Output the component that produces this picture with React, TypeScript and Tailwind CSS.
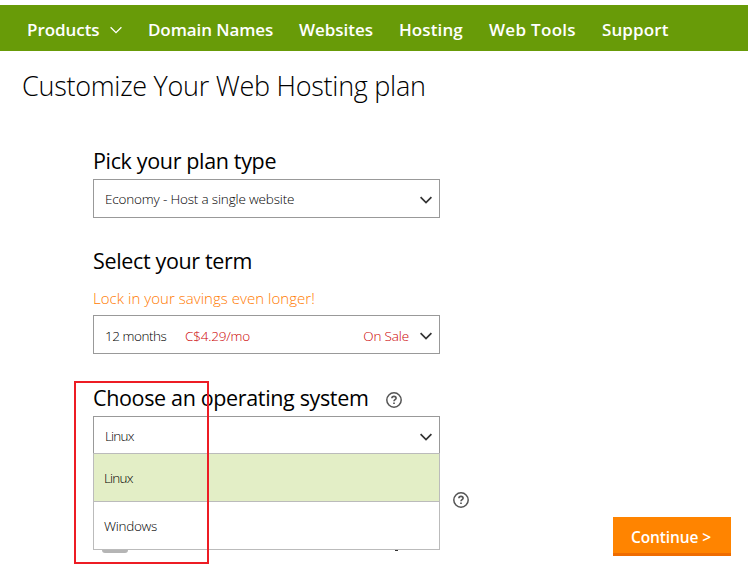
import React from "react";

function Chevron({ className, stroke = 1.7 }: { className: string; stroke?: number }) {
  return (
    <svg className={className} viewBox="0 0 12 8" fill="none" stroke="currentColor" strokeWidth={stroke}>
      <path d="M0.6 1.2 L6 6.6 L11.4 1.2" />
    </svg>
  );
}

function Help() {
  return (
    <svg className="size-4 shrink-0 text-[#555]" viewBox="0 0 16 16" fill="none" stroke="currentColor">
      <circle cx="8" cy="8" r="7.2" strokeWidth="1.5" />
      <path d="M5.9 6.2 C5.9 3.8 10.1 3.8 10.1 6.2 C10.1 7.6 8 7.7 8 9.3" strokeWidth="1.6" />
      <path d="M8 10.4 V12" strokeWidth="1.7" />
    </svg>
  );
}

const heading = "h-[30px] whitespace-nowrap text-[21.5px] leading-[30px] tracking-[-0.35px] text-black";
const select =
  "flex w-[347px] items-center border border-[#999] bg-white pl-[11px] pr-[7px] text-[13.5px] font-light text-black";

export default function App() {
  return (
    <div className="relative h-[578px] w-[748px] overflow-hidden bg-white pt-[5px] font-['Open_Sans','Noto_Sans',sans-serif]">
      <nav className="flex h-[46px] items-center whitespace-nowrap bg-[#689b08] pl-[27px] pt-[3px] text-[17px] font-semibold text-white">
        <span className="w-[83px] tracking-[-0.05px]">Products</span>
        <Chevron className="mr-[26px] h-2 w-3" stroke={1.3} />
        <span className="w-[151px] tracking-[-0.1px]">Domain Names</span>
        <span className="w-[100px] tracking-[-0.05px]">Websites</span>
        <span className="w-[90px] tracking-[0.1px]">Hosting</span>
        <span className="w-[113px] tracking-[0.3px]">Web Tools</span>
        <span className="tracking-[0.1px]">Support</span>
      </nav>

      <h1 className="mt-[15px] h-10 whitespace-nowrap pl-[22px] text-[27px] font-light leading-10 tracking-[-0.28px] text-black">
        Customize Your Web Hosting plan
      </h1>

      <main className="flex flex-col pl-[93px] pt-10">
        <h2 className={heading}>Pick your plan type</h2>
        <div className={`${select} mt-[3px] h-[39px] pt-[2px]`}>
          <span className="whitespace-nowrap tracking-[-0.17px]">Economy - Host a single website</span>
          <Chevron className="ml-auto h-2 w-3 text-[#333]" />
        </div>

        <h2 className={`${heading} mt-[28px]`}>Select your term</h2>
        <p className="mt-[12px] h-5 whitespace-nowrap text-[15px] font-light leading-5 tracking-[0.04px] text-[#ff7a00]">
          Lock in your savings even longer!
        </p>
        <div className={`${select} mt-[7px] h-[39px] pt-[3px]`}>
          <span className="w-20 whitespace-nowrap tracking-[-0.45px]">12 months</span>
          <span className="whitespace-nowrap tracking-[-0.2px] text-[#cc0000]">C$4.29/mo</span>
          <span className="ml-auto mr-[11px] whitespace-nowrap tracking-[-0.15px] text-[#cc0000]">On Sale</span>
          <Chevron className="h-2 w-3 text-[#333]" />
        </div>

        <div className="mt-[29px] flex h-[33px]">
          <h2 className={`${heading} w-[293px]`}>Choose an operating system</h2>
          <div className="pt-[9px]"><Help /></div>
        </div>
        <div className="flex">
          <div>
            <div className={`${select} h-[37px] border-b-0 pt-[3px]`}>
              <span className="tracking-[-0.8px]">Linux</span>
              <Chevron className="ml-auto h-2 w-3 text-[#333]" />
            </div>
            <ul className="w-[347px] border border-[#bbb] text-[13.5px] font-light text-black">
              <li className="flex h-12 items-center border-b border-[#bbb] bg-[#e3eec6] pl-[10px] pt-[2px] tracking-[-0.8px]">Linux</li>
              <li className="flex h-[47px] items-center bg-white pl-[10px] pt-[2px] tracking-[-0.3px]">Windows</li>
            </ul>
            <div className="flex justify-between pl-[9px] pr-[42px]">
              <div className="h-[3px] w-[26px] rounded-b-md bg-[#b5b5b5]" />
              <div className="h-px w-[3px] bg-[#333]" />
            </div>
          </div>
          <div className="ml-[13px] pt-[76px]"><Help /></div>
        </div>
      </main>

      <div className="absolute left-[74px] top-[381px] h-[183px] w-[135px] border-2 border-[#ed1c24]" />
      <button className="absolute left-[613px] top-[517px] h-[39px] w-[118px] whitespace-nowrap border-b-[3px] border-[#ef6c00] bg-[#ff8400] pr-[2px] pt-[4px] text-[15.5px] font-semibold leading-5 tracking-[-0.1px] text-white">
        Continue &gt;
      </button>
    </div>
  );
}
